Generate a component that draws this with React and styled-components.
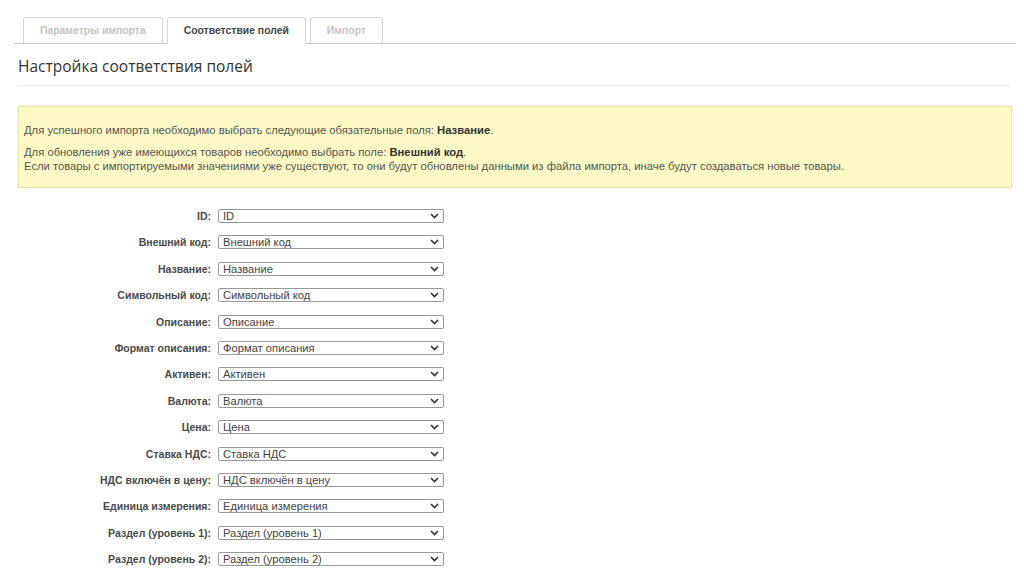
import React from 'react';
import styled, { createGlobalStyle } from 'styled-components';

const GlobalStyle = createGlobalStyle`
  body {
    margin: 0;
    background: #fff;
    font-family: "Liberation Sans", Arial, sans-serif;
    color: #333;
  }
`;

const Page = styled.div`
  padding: 16px 8px 0 14px;
  width: 1002px;
`;

const Tabs = styled.div`
  display: flex;
  gap: 4px;
  padding-left: 9px;
  border-bottom: 1px solid #c8c8c8;
  height: 27px;
`;

const Tab = styled.div`
  box-sizing: border-box;
  padding: 0 16px;
  display: flex;
  align-items: center;
  font-size: 10.4px;
  font-weight: bold;
  color: ${p => (p.$active ? '#444' : '#c4c4c4')};
  border: 1px solid #d6d6d6;
  border-bottom: ${p => (p.$active ? '1px solid #fff' : 'none')};
  border-radius: 3px 3px 0 0;
  background: #fff;
  margin-top: 1px;
  height: ${p => (p.$active ? '27px' : '26px')};
`;

const Title = styled.h2`
  margin: 11px 6px 0 4px;
  padding-bottom: 8px;
  font-family: "Open Sans", sans-serif;
  font-weight: 400;
  font-size: 15.5px;
  color: #333;
  border-bottom: 1px solid #e8e8e8;
`;

const Notice = styled.div`
  margin: 20px 4px 0 4px;
  background: #fdfac6;
  border: 1px solid #ebe2a0;
  padding: 16px 5px 14px 5px;
  font-size: 11.25px;
  color: #555;
  line-height: 14px;
  p {
    margin: 0;
  }
  p + p {
    margin-top: 8px;
  }
  b {
    color: #333;
  }
`;

const Form = styled.div`
  display: flex;
  flex-direction: column;
  gap: 12.42px;
  margin-top: 21px;
`;

const Row = styled.div`
  display: flex;
  align-items: center;
  height: 14px;
`;

const Label = styled.div`
  width: 197px;
  text-align: right;
  font-size: 10.5px;
  font-weight: bold;
  color: #4a4a4a;
  padding-right: 7px;
  white-space: nowrap;
`;

const Select = styled.div`
  width: 226px;
  height: 14px;
  box-sizing: border-box;
  border: 1px solid #999;
  border-radius: 2px;
  display: flex;
  align-items: center;
  justify-content: space-between;
  padding: 0 4px 0 4px;
  font-size: 11.2px;
  color: #444;
  background: #fff;
  span {
    line-height: 12px;
  }
`;

const Chevron = () => (
  <svg width="9" height="6" viewBox="0 0 9 6">
    <path d="M1 1l3.5 3.5L8 1" fill="none" stroke="#333" strokeWidth="1.6" />
  </svg>
);

const fields = [
  'ID',
  'Внешний код',
  'Название',
  'Символьный код',
  'Описание',
  'Формат описания',
  'Активен',
  'Валюта',
  'Цена',
  'Ставка НДС',
  'НДС включён в цену',
  'Единица измерения',
  'Раздел (уровень 1)',
  'Раздел (уровень 2)',
];

const App = () => (
  <Page>
    <GlobalStyle />
    <Tabs>
      <Tab>Параметры импорта</Tab>
      <Tab $active>Соответствие полей</Tab>
      <Tab>Импорт</Tab>
    </Tabs>
    <Title>Настройка соответствия полей</Title>
    <Notice>
      <p>
        Для успешного импорта необходимо выбрать следующие обязательные поля: <b>Название</b>.
      </p>
      <p>
        Для обновления уже имеющихся товаров необходимо выбрать поле: <b>Внешний код</b>.
        <br />
        Если товары с импортируемыми значениями уже существуют, то они будут обновлены данными из
        файла импорта, иначе будут создаваться новые товары.
      </p>
    </Notice>
    <Form>
      {fields.map(name => (
        <Row key={name}>
          <Label>{name}:</Label>
          <Select>
            <span>{name}</span>
            <Chevron />
          </Select>
        </Row>
      ))}
    </Form>
  </Page>
);

export default App;
